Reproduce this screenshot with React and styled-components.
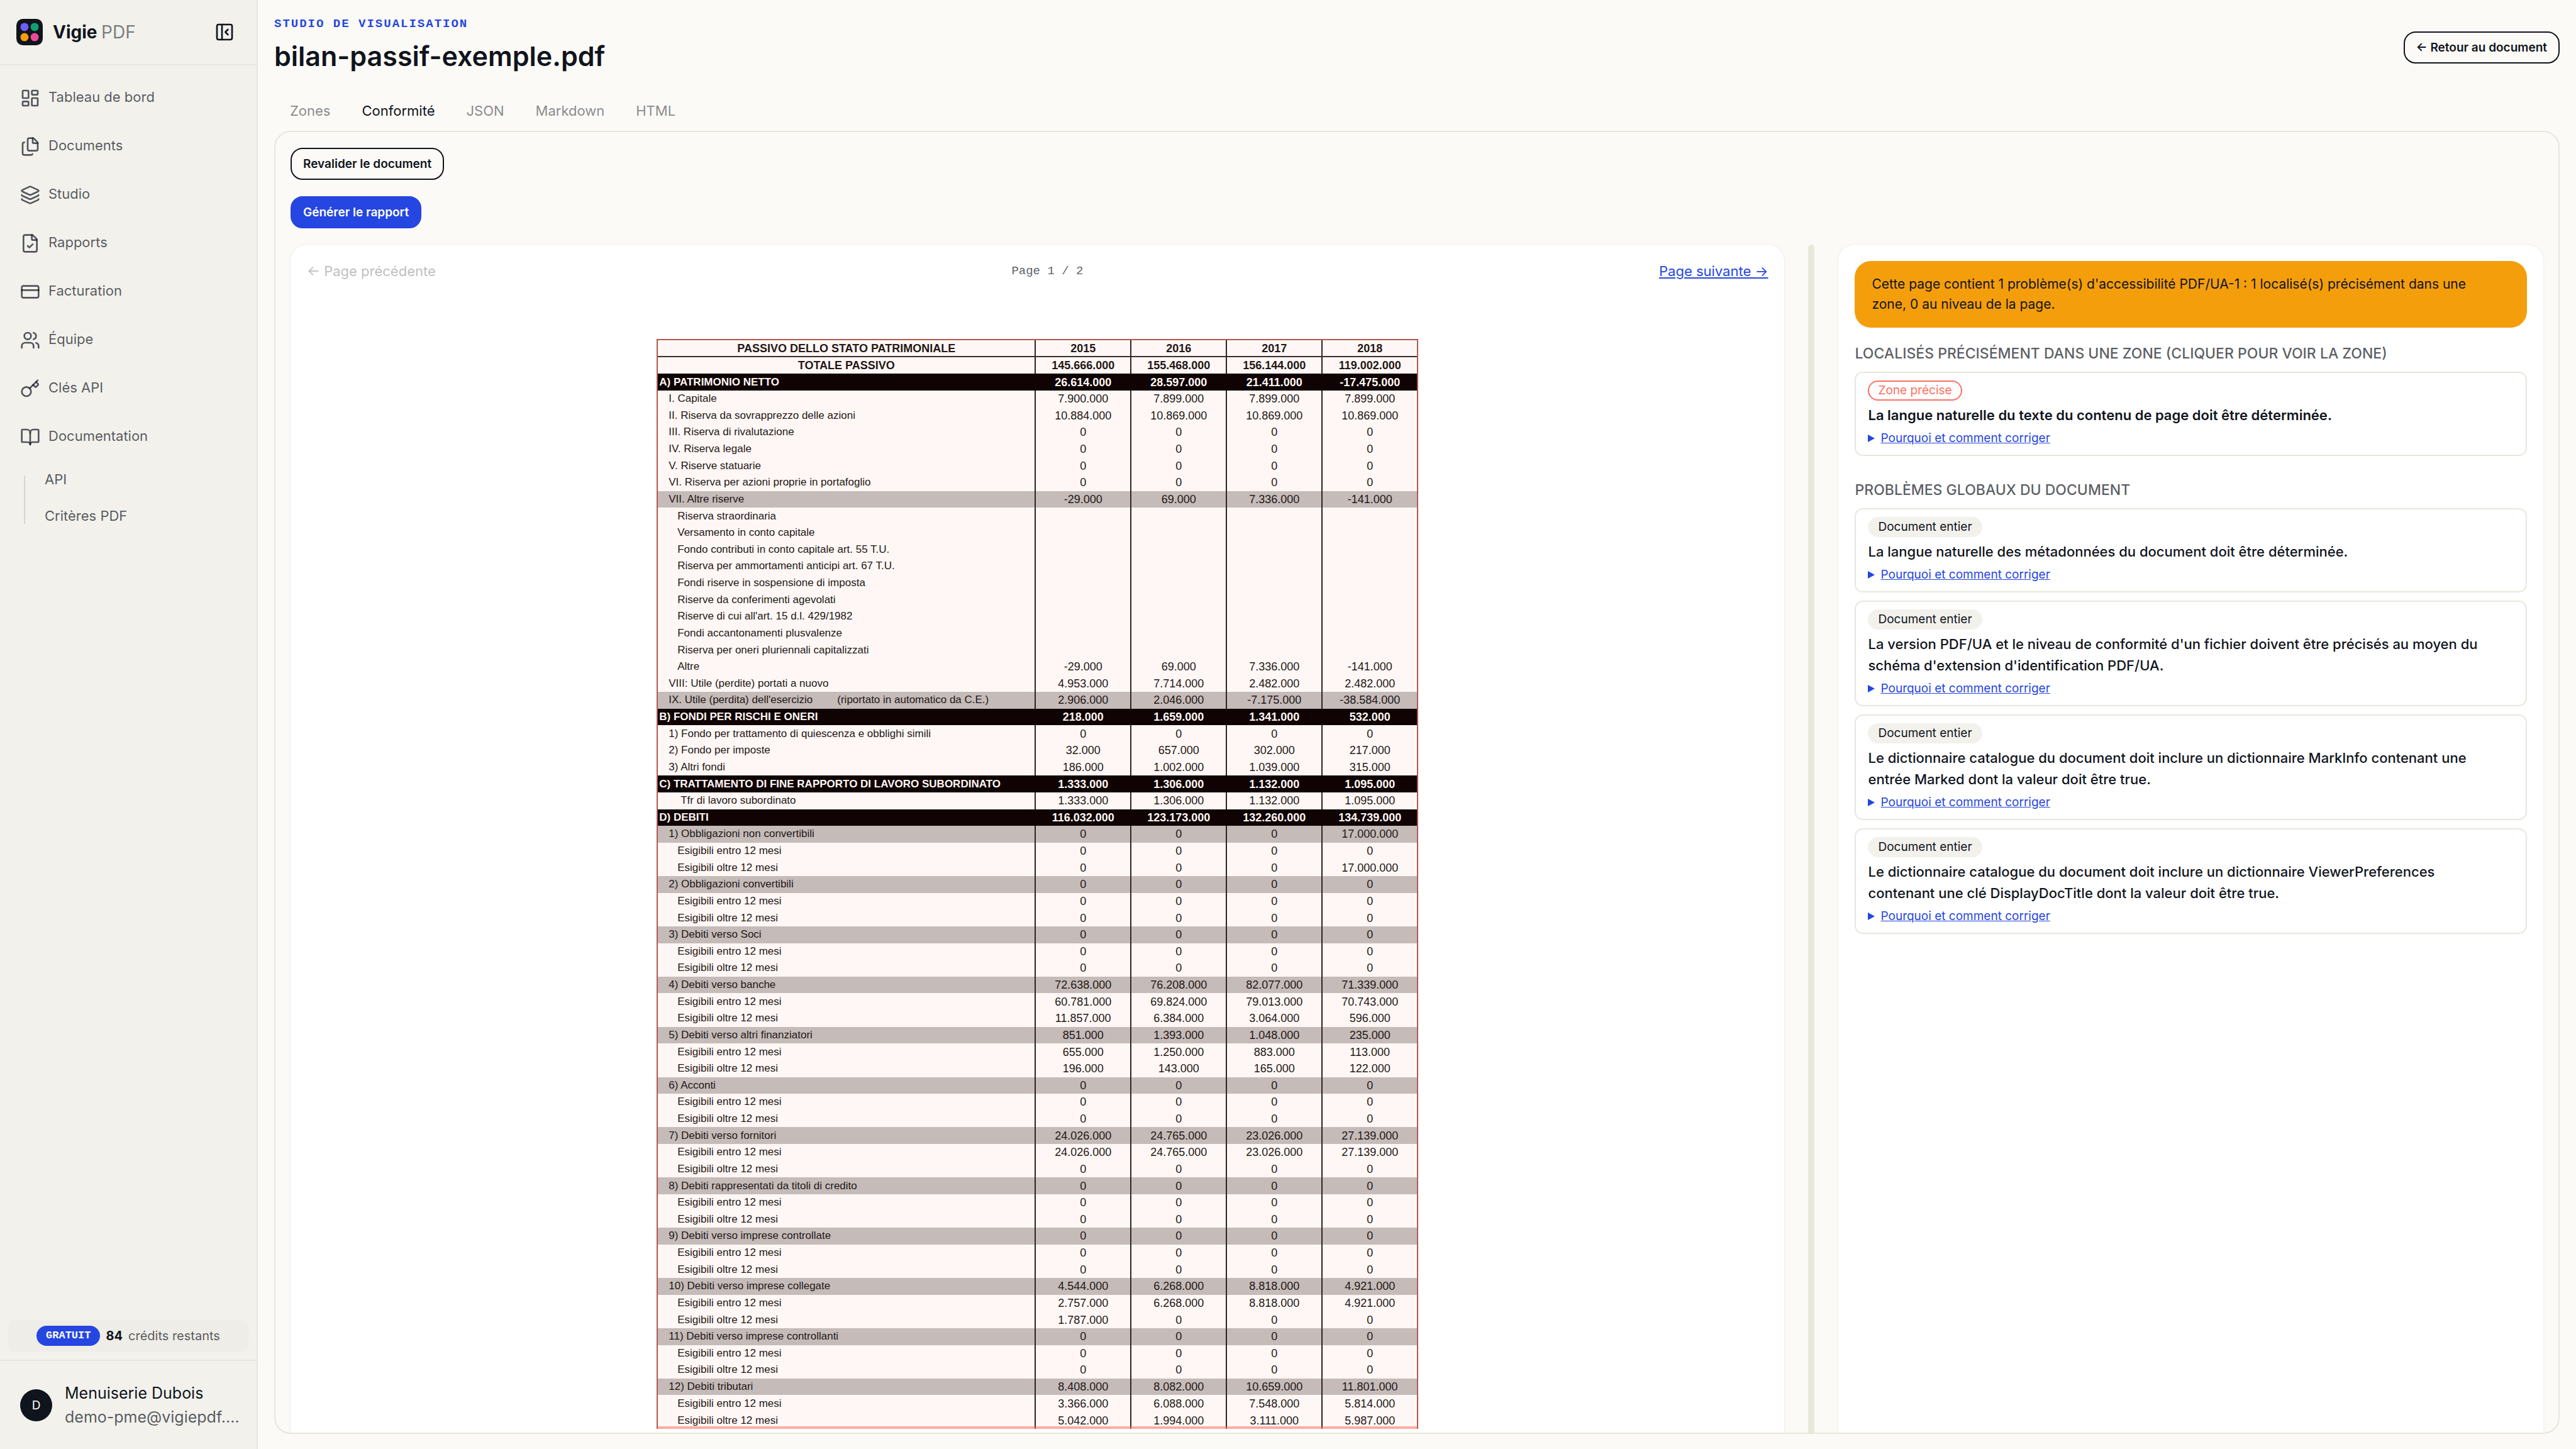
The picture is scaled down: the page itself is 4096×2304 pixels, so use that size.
import React from "react";
import styled, { createGlobalStyle, css } from "styled-components";
import {
  LayoutDashboard,
  Files,
  Layers,
  FileCheck,
  CreditCard,
  Users,
  Key,
  BookOpen,
  PanelLeftClose,
} from "lucide-react";

const ink = "#10141c";
const soft = "rgba(16, 20, 28, 0.7)";
const line = "#e8e7dc";
const paper = "#fbfaf6";
const shade = "#f2f1ec";
const blue = "#2546e0";
const mono = `"Liberation Mono", "DejaVu Sans Mono", monospace`;

const GlobalStyle = createGlobalStyle`
  *, *::before, *::after { box-sizing: border-box; }
  body {
    margin: 0;
    background: ${paper};
    color: ${ink};
    font-family: Inter, "Liberation Sans", sans-serif;
    font-size: 22px;
  }
  button { font: inherit; cursor: pointer; }
  h1, h2, p, ul { margin: 0; padding: 0; }
  ul { list-style: none; }
`;

const Shell = styled.div`
  display: flex;
  height: 100vh;
`;

/* Sidebar */

const Sidebar = styled.aside`
  flex: none;
  width: 410px;
  display: flex;
  flex-direction: column;
  background: ${shade};
  border-right: 2px solid ${line};
`;

const Brand = styled.header`
  display: flex;
  align-items: center;
  height: 104px;
  padding: 0 35px 0 26px;
  gap: 16px;
  border-bottom: 2px solid ${line};
  svg { flex: none; }
`;

const BrandName = styled.a`
  flex: 1;
  font-size: 28px;
  font-weight: 700;
  color: ${ink};
  text-decoration: none;
  span { font-weight: 400; color: rgba(16, 20, 28, 0.55); }
`;

const IconButton = styled.button`
  display: flex;
  padding: 0;
  border: 0;
  background: none;
  color: ${ink};
`;

const Nav = styled.nav`
  flex: 1;
  padding-top: 13px;
`;

const NavLink = styled.a`
  display: flex;
  align-items: center;
  gap: 13px;
  height: 77px;
  padding-left: 32px;
  color: ${soft};
  text-decoration: none;
  span { padding-bottom: 4px; }
`;

const SubNav = styled.div`
  display: flex;
  gap: 31px;
  padding-left: 38px;
`;

const Rail = styled.div`
  width: 2px;
  margin: 23px 0 16px;
  background: rgba(16, 20, 28, 0.12);
`;

const SubLink = styled.a`
  display: flex;
  align-items: center;
  height: 58px;
  color: ${soft};
  text-decoration: none;
`;

const Credits = styled.div`
  display: flex;
  align-items: center;
  justify-content: center;
  gap: 9px;
  height: 51px;
  margin: 13px;
  border-radius: 13px;
  background: #efede7;
  font-size: 20px;
  color: ${soft};
  strong { color: ${ink}; }
`;

const Plan = styled.span`
  padding: 0 15px;
  border-radius: 16px;
  background: ${blue};
  color: #fff;
  font: 700 17px/32px ${mono};
`;

const Account = styled.footer`
  display: flex;
  align-items: center;
  gap: 20px;
  height: 142px;
  padding: 0 20px 0 32px;
  border-top: 2px solid ${line};
`;

const Avatar = styled.div`
  flex: none;
  display: grid;
  place-items: center;
  width: 51px;
  height: 51px;
  border-radius: 50%;
  background: ${ink};
  color: #fff;
  font-size: 19px;
`;

const Identity = styled.div`
  font-size: 25px;
  line-height: 38px;
  white-space: nowrap;
  p + p { color: ${soft}; }
`;

/* Main column */

const Main = styled.main`
  flex: 1;
  min-width: 0;
  display: flex;
  flex-direction: column;
  padding: 24px 26px;
`;

const PageHead = styled.header`
  display: flex;
  align-items: center;
  justify-content: space-between;
`;

const Eyebrow = styled.p`
  font: 700 19px/28px ${mono};
  letter-spacing: 2px;
  color: ${blue};
`;

const Title = styled.h1`
  font-size: 43px;
  font-weight: 600;
  line-height: 74px;
`;

const Button = styled.button`
  height: 51px;
  padding: 0 18px;
  border: 2px solid ${(p) => (p.$primary ? blue : ink)};
  border-radius: 19px;
  background: ${(p) => (p.$primary ? blue : "transparent")};
  color: ${(p) => (p.$primary ? "#fff" : ink)};
  font-size: 19px;
  font-weight: 600;
`;

const Tabs = styled.div`
  display: flex;
  margin-top: 18px;
`;

const Tab = styled.button`
  height: 64px;
  padding: 0 25px;
  border: 0;
  background: none;
  color: ${(p) => (p["aria-selected"] ? ink : "rgba(16, 20, 28, 0.5)")};
`;

const Panel = styled.section`
  flex: 1;
  min-height: 0;
  overflow: hidden;
  display: flex;
  flex-direction: column;
  align-items: flex-start;
  gap: 26px;
  padding: 25px 24px 0;
  border: 2px solid ${line};
  border-radius: 26px;
`;

const Split = styled.div`
  flex: 1;
  align-self: stretch;
  min-height: 0;
  display: grid;
  grid-template-columns: minmax(0, 212fr) 10px minmax(0, 100fr);
  gap: 38px;
`;

const Handle = styled.div`
  border-radius: 5px 5px 0 0;
  background: #eae8dd;
`;

const Card = styled.div`
  min-height: 0;
  padding: 26px;
  border-radius: 26px 26px 0 0;
  background: #fff;
  box-shadow: 0 0 3px rgba(16, 20, 28, 0.1);
`;

const Pager = styled.div`
  display: flex;
  align-items: center;
  justify-content: space-between;
  line-height: 32px;
`;

const PagerButton = styled.button`
  padding: 0;
  border: 0;
  background: none;
  color: ${blue};
  text-decoration: underline;
  &:disabled {
    color: rgba(16, 20, 28, 0.3);
    text-decoration: none;
    cursor: default;
  }
`;

const PageCount = styled.span`
  font: 19px/32px ${mono};
  color: ${soft};
`;

/* Document page */

const PageView = styled.div`
  position: relative;
  width: 52%;
  min-width: 1211px;
  margin: 92px auto 0;
`;

/* Tinted region laid over the part of the page that has a finding */
const Zone = styled.div`
  position: absolute;
  inset: 0;
  border: 2px solid rgba(255, 111, 97, 0.55);
  border-bottom-width: 4px;
  pointer-events: none;
`;

const Sheet = styled.table`
  table-layout: fixed;
  width: 100%;
  height: 1733px;
  border: solid #5a3a38;
  border-width: 2px 2px 0;
  border-spacing: 0;
  background: #fff7f5;
  color: #231816;
  font: 18px/20px "Liberation Sans", Arial, sans-serif;
`;

const Row = styled.tr`
  ${(p) =>
    (p.$kind === "title" || p.$kind === "black") &&
    css`
      font-weight: 700;
    `}
  ${(p) =>
    p.$kind === "black" &&
    css`
      background: #0f0303;
      color: #fff7f5;
    `}
  ${(p) =>
    p.$kind === "grey" &&
    css`
      background: #c5bbb9;
    `}
`;

const ruled = css`
  box-shadow: ${(p) => (p.$ruled ? "inset 0 -2px #3a2e2c" : "none")};
`;

const Label = styled.th`
  padding: 0 0 0 ${(p) => p.$indent}px;
  font-size: ${(p) => (p.$center ? 18 : 17)}px;
  font-weight: inherit;
  text-align: ${(p) => (p.$center ? "center" : "left")};
  white-space: nowrap;
  ${ruled}
`;

const Note = styled.span`
  margin-left: 39px;
`;

const Amount = styled.td`
  width: 152px;
  padding: 0;
  text-align: center;
  border-left: 2px solid ${(p) => (p.$kind === "black" ? "#0f0303" : "#2e2422")};
  ${ruled}
`;

/* Findings */

const Alert = styled.p`
  padding: 21px 59px 21px 27px;
  border-radius: 26px;
  background: #f59e0b;
  font-size: 21px;
  line-height: 32px;
`;

const Group = styled.section`
  display: flow-root;
  margin-top: 24px;
`;

const GroupTitle = styled.h2`
  margin-bottom: 12px;
  font-size: 23px;
  font-weight: 500;
  line-height: 34px;
  text-transform: uppercase;
  color: ${soft};
`;

const Issue = styled.article`
  display: flex;
  flex-direction: column;
  align-items: flex-start;
  gap: 6px;
  margin-bottom: 13px;
  padding: 12px 51px 12px 19px;
  border: 2px solid ${line};
  border-radius: 13px;
`;

const Scope = styled.span`
  padding: 0 14px;
  border: 2px solid ${(p) => (p.$precise ? "#ff6f61" : shade)};
  border-radius: 16px;
  background: ${(p) => (p.$precise ? "transparent" : shade)};
  color: ${(p) => (p.$precise ? "#ff6f61" : ink)};
  font-size: 19px;
  line-height: 28px;
`;

const Rule = styled.p`
  font-weight: ${(p) => (p.$precise ? 600 : 500)};
  line-height: 34px;
`;

const Summary = styled.summary`
  display: flex;
  align-items: center;
  gap: 9px;
  color: ${blue};
  font-size: 19px;
  line-height: 28px;
  text-decoration: underline;
  cursor: pointer;
  &::before {
    content: "";
    border: solid transparent;
    border-width: 6px 0 6px 11px;
    border-left-color: ${blue};
  }
`;

const navItems = [
  ["Tableau de bord", LayoutDashboard],
  ["Documents", Files],
  ["Studio", Layers],
  ["Rapports", FileCheck],
  ["Facturation", CreditCard],
  ["Équipe", Users],
  ["Clés API", Key],
  ["Documentation", BookOpen],
];

const zero = "0|0|0|0";
const blank = "|||";
const entro = (v = zero) => ["sub", "Esigibili entro 12 mesi", v];
const oltre = (v = zero) => ["sub", "Esigibili oltre 12 mesi", v];

const rows = [
  ["title", "PASSIVO DELLO STATO PATRIMONIALE", "2015|2016|2017|2018"],
  ["title", "TOTALE PASSIVO", "145.666.000|155.468.000|156.144.000|119.002.000"],
  ["black", "A) PATRIMONIO NETTO", "26.614.000|28.597.000|21.411.000|-17.475.000"],
  ["item", "I. Capitale", "7.900.000|7.899.000|7.899.000|7.899.000"],
  ["item", "II. Riserva da sovrapprezzo delle azioni", "10.884.000|10.869.000|10.869.000|10.869.000"],
  ["item", "III. Riserva di rivalutazione", zero],
  ["item", "IV. Riserva legale", zero],
  ["item", "V. Riserve statuarie", zero],
  ["item", "VI. Riserva per azioni proprie in portafoglio", zero],
  ["grey", "VII. Altre riserve", "-29.000|69.000|7.336.000|-141.000"],
  ["sub", "Riserva straordinaria", blank],
  ["sub", "Versamento in conto capitale", blank],
  ["sub", "Fondo contributi in conto capitale art. 55 T.U.", blank],
  ["sub", "Riserva per ammortamenti anticipi art. 67 T.U.", blank],
  ["sub", "Fondi riserve in sospensione di imposta", blank],
  ["sub", "Riserve da conferimenti agevolati", blank],
  ["sub", "Riserve di cui all'art. 15 d.l. 429/1982", blank],
  ["sub", "Fondi accantonamenti plusvalenze", blank],
  ["sub", "Riserva per oneri pluriennali capitalizzati", blank],
  ["sub", "Altre", "-29.000|69.000|7.336.000|-141.000"],
  ["item", "VIII: Utile (perdite) portati a nuovo", "4.953.000|7.714.000|2.482.000|2.482.000"],
  ["grey", "IX. Utile (perdita) dell'esercizio", "2.906.000|2.046.000|-7.175.000|-38.584.000", "(riportato in automatico da C.E.)"],
  ["black", "B) FONDI PER RISCHI E ONERI", "218.000|1.659.000|1.341.000|532.000"],
  ["item", "1) Fondo per trattamento di quiescenza e obblighi simili", zero],
  ["item", "2) Fondo per imposte", "32.000|657.000|302.000|217.000"],
  ["item", "3) Altri fondi", "186.000|1.002.000|1.039.000|315.000"],
  ["black", "C) TRATTAMENTO DI FINE RAPPORTO DI LAVORO SUBORDINATO", "1.333.000|1.306.000|1.132.000|1.095.000"],
  ["deep", "Tfr di lavoro subordinato", "1.333.000|1.306.000|1.132.000|1.095.000"],
  ["black", "D) DEBITI", "116.032.000|123.173.000|132.260.000|134.739.000"],
  ["grey", "1) Obbligazioni non convertibili", "0|0|0|17.000.000"],
  entro(),
  oltre("0|0|0|17.000.000"),
  ["grey", "2) Obbligazioni convertibili", zero],
  entro(),
  oltre(),
  ["grey", "3) Debiti verso Soci", zero],
  entro(),
  oltre(),
  ["grey", "4) Debiti verso banche", "72.638.000|76.208.000|82.077.000|71.339.000"],
  entro("60.781.000|69.824.000|79.013.000|70.743.000"),
  oltre("11.857.000|6.384.000|3.064.000|596.000"),
  ["grey", "5) Debiti verso altri finanziatori", "851.000|1.393.000|1.048.000|235.000"],
  entro("655.000|1.250.000|883.000|113.000"),
  oltre("196.000|143.000|165.000|122.000"),
  ["grey", "6) Acconti", zero],
  entro(),
  oltre(),
  ["grey", "7) Debiti verso fornitori", "24.026.000|24.765.000|23.026.000|27.139.000"],
  entro("24.026.000|24.765.000|23.026.000|27.139.000"),
  oltre(),
  ["grey", "8) Debiti rappresentati da titoli di credito", zero],
  entro(),
  oltre(),
  ["grey", "9) Debiti verso imprese controllate", zero],
  entro(),
  oltre(),
  ["grey", "10) Debiti verso imprese collegate", "4.544.000|6.268.000|8.818.000|4.921.000"],
  entro("2.757.000|6.268.000|8.818.000|4.921.000"),
  oltre("1.787.000|0|0|0"),
  ["grey", "11) Debiti verso imprese controllanti", zero],
  entro(),
  oltre(),
  ["grey", "12) Debiti tributari", "8.408.000|8.082.000|10.659.000|11.801.000"],
  entro("3.366.000|6.088.000|7.548.000|5.814.000"),
  oltre("5.042.000|1.994.000|3.111.000|5.987.000"),
];

const indentOf = { title: 0, black: 2, grey: 17, item: 17, sub: 31, deep: 36 };

const globalIssues = [
  "La langue naturelle des métadonnées du document doit être déterminée.",
  "La version PDF/UA et le niveau de conformité d'un fichier doivent être précisés au moyen du schéma d'extension d'identification PDF/UA.",
  "Le dictionnaire catalogue du document doit inclure un dictionnaire MarkInfo contenant une entrée Marked dont la valeur doit être true.",
  "Le dictionnaire catalogue du document doit inclure un dictionnaire ViewerPreferences contenant une clé DisplayDocTitle dont la valeur doit être true.",
];

function Logo() {
  return (
    <svg width="42" height="42" viewBox="0 0 52 52" aria-hidden="true">
      <rect width="52" height="52" rx="13" fill={ink} />
      <circle cx="16" cy="16" r="8" fill="#6f5ff7" />
      <circle cx="36" cy="16" r="8" fill="#10a06e" />
      <circle cx="16" cy="36" r="8" fill="#f59e0b" />
      <circle cx="36" cy="36" r="8" fill="#ec4899" />
    </svg>
  );
}

function Finding({ precise, children }) {
  return (
    <Issue>
      <Scope $precise={precise}>{precise ? "Zone précise" : "Document entier"}</Scope>
      <Rule $precise={precise}>{children}</Rule>
      <details>
        <Summary>Pourquoi et comment corriger</Summary>
      </details>
    </Issue>
  );
}

function BalanceSheet() {
  return (
    <PageView>
      <Sheet>
        <tbody>
          {rows.map(([kind, label, values, note], i) => (
            <Row key={i} $kind={kind}>
              <Label scope="row" $indent={indentOf[kind]} $center={kind === "title"} $ruled={i === 0}>
                {label}
                {note && <Note>{note}</Note>}
              </Label>
              {values.split("|").map((v, j) => (
                <Amount key={j} $kind={kind} $ruled={i === 0}>{v}</Amount>
              ))}
            </Row>
          ))}
        </tbody>
      </Sheet>
      <Zone />
    </PageView>
  );
}

export default function App() {
  return (
    <>
      <GlobalStyle />
      <Shell>
        <Sidebar>
          <Brand>
            <Logo />
            <BrandName href="#">
              Vigie <span>PDF</span>
            </BrandName>
            <IconButton aria-label="Réduire le menu">
              <PanelLeftClose size={32} />
            </IconButton>
          </Brand>
          <Nav>
            {navItems.map(([label, Icon]) => (
              <NavLink key={label} href="#">
                <Icon size={32} />
                <span>{label}</span>
              </NavLink>
            ))}
            <SubNav>
              <Rail />
              <ul>
                <li><SubLink href="#">API</SubLink></li>
                <li><SubLink href="#">Critères PDF</SubLink></li>
              </ul>
            </SubNav>
          </Nav>
          <Credits>
            <Plan>GRATUIT</Plan>
            <strong>84</strong>
            <span>crédits restants</span>
          </Credits>
          <Account>
            <Avatar>D</Avatar>
            <Identity>
              <p>Menuiserie Dubois</p>
              <p>demo-pme@vigiepdf.…</p>
            </Identity>
          </Account>
        </Sidebar>
        <Main>
          <PageHead>
            <div>
              <Eyebrow>STUDIO DE VISUALISATION</Eyebrow>
              <Title>bilan-passif-exemple.pdf</Title>
            </div>
            <Button>← Retour au document</Button>
          </PageHead>
          <Tabs role="tablist">
            {["Zones", "Conformité", "JSON", "Markdown", "HTML"].map((t) => (
              <Tab key={t} role="tab" aria-selected={t === "Conformité"}>{t}</Tab>
            ))}
          </Tabs>
          <Panel>
            <Button>Revalider le document</Button>
            <Button $primary>Générer le rapport</Button>
            <Split>
              <Card>
                <Pager>
                  <PagerButton disabled>← Page précédente</PagerButton>
                  <PageCount>Page 1 / 2</PageCount>
                  <PagerButton>Page suivante →</PagerButton>
                </Pager>
                <BalanceSheet />
              </Card>
              <Handle />
              <Card>
                <Alert>
                  Cette page contient 1 problème(s) d'accessibilité PDF/UA-1 : 1 localisé(s) précisément dans une zone, 0 au niveau de la page.
                </Alert>
                <Group>
                  <GroupTitle>Localisés précisément dans une zone (cliquer pour voir la zone)</GroupTitle>
                  <Finding precise>La langue naturelle du texte du contenu de page doit être déterminée.</Finding>
                </Group>
                <Group>
                  <GroupTitle>Problèmes globaux du document</GroupTitle>
                  {globalIssues.map((t) => (
                    <Finding key={t}>{t}</Finding>
                  ))}
                </Group>
              </Card>
            </Split>
          </Panel>
        </Main>
      </Shell>
    </>
  );
}
